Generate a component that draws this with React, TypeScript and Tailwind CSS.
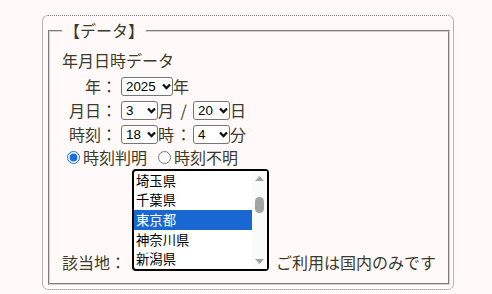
import { useState } from 'react';

const visiblePrefs = ['埼玉県', '千葉県', '東京都', '神奈川県', '新潟県'];

const years = ['2023', '2024', '2025', '2026'];
const months = Array.from({ length: 12 }, (_, i) => String(i + 1));
const days = Array.from({ length: 31 }, (_, i) => String(i + 1));
const hours = Array.from({ length: 24 }, (_, i) => String(i));
const minutes = Array.from({ length: 60 }, (_, i) => String(i));

const selectCls =
  "h-[19px] appearance-none rounded-[3px] border border-[#767676] bg-white pl-[4px] pr-[12px] text-[13.33px] leading-[17px] text-black font-['Liberation_Sans','Noto_Sans_CJK_JP',sans-serif]";

function Picker({ value, options, width }: { value: string; options: string[]; width: string }) {
  return (
    <span className="relative flex">
      <select defaultValue={value} className={`${selectCls} ${width}`}>
        {options.map((o) => (
          <option key={o} value={o}>
            {o}
          </option>
        ))}
      </select>
      {/* chevron */}
      <svg
        width="9"
        height="7"
        viewBox="0 0 9 7"
        className="pointer-events-none absolute right-[2px] top-[6px]"
      >
        <path d="M1 1.5 L4.5 5 L8 1.5" fill="none" stroke="#111" strokeWidth="2.3" />
      </svg>
    </span>
  );
}

export default function App() {
  const [known, setKnown] = useState(true);
  const [pref, setPref] = useState('東京都');

  return (
    <div className="min-h-[294px] w-[492px] bg-[#fffaf9] pl-[42px] pt-[15px] text-[16px] text-[#3b3b2a] font-['Noto_Sans_CJK_JP',sans-serif]">
      <div className="h-[275px] w-[412px] rounded-[6px] border border-[#b4b4b4] border-y-[#7a7a7a] px-[5px] pb-[4px] pt-[3px] [border-style:dotted_solid]">
        <fieldset className="h-full border-2 border-[#d0d0d0] px-3 pt-[6px] [border-style:groove]">
          <legend className="px-[2px] leading-[23px]">【データ】</legend>

          {/* 年月日時 */}
          <div className="h-[24px] leading-[24px]">年月日時データ</div>

          <div className="mt-[2px] flex h-[24px] items-center">
            <span className="mr-[4px] w-[55px] text-right">年：</span>
            <Picker value="2025" options={years} width="w-[52px]" />
            <span>年</span>
          </div>

          <div className="flex h-[24px] items-center">
            <span className="mr-[4px] w-[55px] text-right">月日：</span>
            <Picker value="3" options={months} width="w-[37px]" />
            <span>月</span>
            <span className="w-[19px] text-center">/</span>
            <Picker value="20" options={days} width="w-[37px]" />
            <span>日</span>
          </div>

          <div className="flex h-[24px] items-center">
            <span className="mr-[4px] w-[55px] text-right">時刻：</span>
            <Picker value="18" options={hours} width="w-[37px]" />
            <span>時</span>
            <span className="w-[19px] text-center">：</span>
            <Picker value="4" options={minutes} width="w-[37px]" />
            <span>分</span>
          </div>

          {/* 時刻判明 / 不明 */}
          <div className="flex h-[22px] items-center">
            <label className="flex items-center">
              <input
                type="radio"
                name="known"
                checked={known}
                onChange={() => setKnown(true)}
                className="ml-[5px] mr-[3px] h-[13px] w-[13px] accent-[#1a6fd9]"
              />
              時刻判明
            </label>
            <label className="ml-[6px] flex items-center">
              <input
                type="radio"
                name="known"
                checked={!known}
                onChange={() => setKnown(false)}
                className="ml-[5px] mr-[3px] h-[13px] w-[13px] accent-[#1a6fd9]"
              />
              時刻不明
            </label>
          </div>

          {/* 該当地 */}
          <div className="mt-[1px] flex items-end">
            <span className="w-[70px] shrink-0 leading-[18px]">該当地：</span>
            <div className="flex h-[102px] w-[137px] shrink-0 rounded-[4px] border-2 border-black bg-white">
              <ul className="w-[118px] overflow-hidden text-[13.33px] text-black">
                {visiblePrefs.map((p) => (
                  <li
                    key={p}
                    onClick={() => setPref(p)}
                    className={`flex h-[19.6px] items-center px-[2px] ${
                      p === pref ? 'bg-[#1967d2] text-white' : ''
                    }`}
                  >
                    {p}
                  </li>
                ))}
              </ul>
              {/* scrollbar */}
              <div className="flex w-[15px] flex-col items-center bg-[#fafafa]">
                <div className="flex h-[15px] items-center justify-center">
                  <svg width="9" height="5" viewBox="0 0 9 5">
                    <polygon points="4.5,0 9,5 0,5" fill="#a3a3a3" />
                  </svg>
                </div>
                <div className="flex-1">
                  <div className="mt-[11px] h-[16px] w-[9px] rounded-full bg-[#a3a3a3]" />
                </div>
                <div className="flex h-[15px] items-center justify-center">
                  <svg width="9" height="5" viewBox="0 0 9 5">
                    <polygon points="0,0 9,0 4.5,5" fill="#a3a3a3" />
                  </svg>
                </div>
              </div>
            </div>
            <span className="ml-[7px] shrink-0 whitespace-nowrap leading-[18px]">ご利用は国内のみです</span>
          </div>
        </fieldset>
      </div>
    </div>
  );
}
